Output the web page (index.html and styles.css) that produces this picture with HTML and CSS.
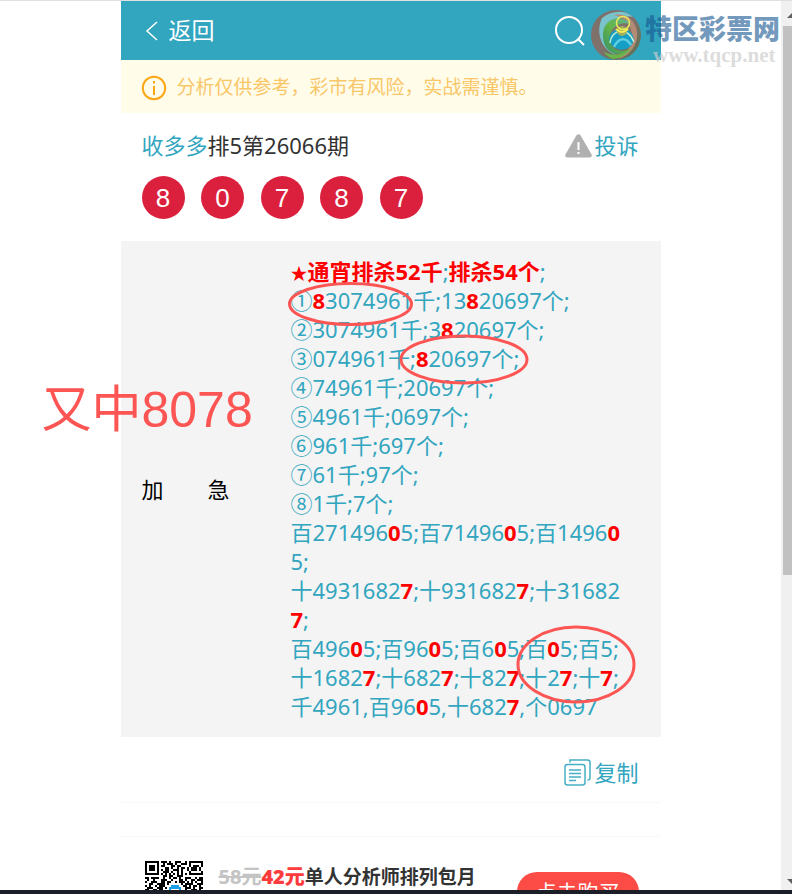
FILE: index.html
```html
<!DOCTYPE html>
<html lang="zh-CN">

<head>
    <meta charset="UTF-8" />
    <meta name="viewport" content="width=device-width, initial-scale=1.0" />
    <title>收多多排5第26066期</title>
    <link rel="stylesheet" href="styles.css">
</head>

<body>
    <div class="window">
        <div class="page">
            <main>
                <header class="topbar">
                    <a class="back" href="#">
                        <svg width="14" height="22" viewBox="0 0 14 22"><path d="M12 2L2 11l10 9" /></svg>
                        返回
                    </a>
                    <button class="search" type="button" aria-label="搜索">
                        <svg width="32" height="32" viewBox="0 0 32 32"><circle cx="15" cy="15" r="13" /><path d="M24 24l6 6" /></svg>
                    </button>
                </header>

                <div class="notice">
                    <svg width="26" height="26" viewBox="0 0 26 26">
                        <circle cx="13" cy="13" r="11.2" />
                        <path d="M13 11v9M13 6v2.5" />
                    </svg>
                    <p>分析仅供参考，彩市有风险，实战需谨慎。</p>
                </div>

                <section class="issue">
                    <div class="issue-head">
                        <h1><a href="#">收多多</a>排5第26066期</h1>
                        <a class="report" href="#">
                            <svg width="27" height="24" viewBox="0 0 27 24">
                                <path d="M11.4 1.5q2.1-2.6 4.2 0l11 19q1 3-2 3H2.4q-3 0-2-3z" fill="#b0b0b0" />
                                <path d="M13.5 8v8M13.5 18v2" stroke="#fff" stroke-width="2" />
                            </svg>
                            投诉
                        </a>
                    </div>
                    <div class="balls">
                        <span>8</span>
                        <span>0</span>
                        <span>7</span>
                        <span>8</span>
                        <span>7</span>
                    </div>
                </section>

                <section class="plan">
                    <div class="plan-name">加　　急</div>
                    <div class="plan-text">
                        <p><b><span class="star">★</span>通宵排杀52千</b>;<b>排杀54个</b>;</p>
                        <p>①<b>8</b>3074961千;13<b>8</b>20697个;</p>
                        <p>②3074961千;3<b>8</b>20697个;</p>
                        <p>③074961千;<b>8</b>20697个;</p>
                        <p>④74961千;20697个;</p>
                        <p>⑤4961千;0697个;</p>
                        <p>⑥961千;697个;</p>
                        <p>⑦61千;97个;</p>
                        <p>⑧1千;7个;</p>
                        <p>百271496<b>0</b>5;百71496<b>0</b>5;百1496<b>0</b>5;</p>
                        <p>十4931682<b>7</b>;十931682<b>7</b>;十31682<b>7</b>;</p>
                        <p>百496<b>0</b>5;百96<b>0</b>5;百6<b>0</b>5;百<b>0</b>5;百5;</p>
                        <p>十1682<b>7</b>;十682<b>7</b>;十82<b>7</b>;十2<b>7</b>;十<b>7</b>;</p>
                        <p>千4961,百96<b>0</b>5,十682<b>7</b>,个0697</p>
                    </div>
                    <svg class="marks" width="540" height="496" viewBox="0 0 540 496">
                        <ellipse cx="229.5" cy="63" rx="61" ry="20.5" />
                        <ellipse cx="343" cy="118.5" rx="63" ry="23.5" />
                        <ellipse cx="455" cy="423.5" rx="58" ry="37.5" />
                    </svg>
                    <div class="win-note">又中8078</div>
                </section>

                <div class="copy-row">
                    <button class="copy" type="button">
                        <svg width="27" height="27" viewBox="0 0 27 27">
                            <path d="M6 3.5V1h17.5q2.5 0 2.5 2.5V19q0 2-2.5 2" />
                            <rect x="1" y="5.5" width="20" height="20.5" rx="2.5" />
                            <path d="M5 11h12M5 14.5h12M5 18h12M5 21.5h7" />
                        </svg>
                        复制
                    </button>
                </div>
                <div class="spacer"></div>

                <section class="promo">
                    <svg class="qr" width="58" height="58" viewBox="0 0 29 29" shape-rendering="crispEdges">
                        <path d="M0 .5h7M8 .5h3m1 0h1m2 0h3m2 0h1M22 .5h7
                            M0 1.5h1m5 0h1m2 0h1m1 0h3m1 0h1m2 0h3m1 0h1m5 0h1
                            M0 2.5h1m1 0h3m1 0h1m1 0h2m3 0h2m1 0h2m4 0h1m1 0h3m1 0h1
                            M0 3.5h1m1 0h3m1 0h1m3 0h2m1 0h1m2 0h1m1 0h2m1 0h1m1 0h3m1 0h1
                            M0 4.5h1m1 0h3m1 0h1m1 0h1m1 0h2m2 0h3m1 0h1m2 0h1m1 0h3m1 0h1
                            M0 5.5h1m5 0h1m2 0h3m1 0h1m2 0h1m1 0h1m3 0h1m5 0h1
                            M0 6.5h7m1 0h1m1 0h1m1 0h1m1 0h1m1 0h1m1 0h1m1 0h1m1 0h7
                            M9 7.5h2m1 0h2m2 0h3
                            M0 8.5h2m1 0h4m2 0h1m2 0h1m1 0h2m1 0h1m2 0h3m2 0h1m1 0h2
                            M1 9.5h1m2 0h1m3 0h3m2 0h1m3 0h2m1 0h1m2 0h2m1 0h4
                            M0 10.5h1m2 0h3m2 0h2m1 0h2m2 0h1m1 0h3m1 0h1m1 0h1m1 0h1m2 0h1
                            M2 11.5h2m2 0h4m1 0h1m6 0h1m1 0h4m2 0h3
                            M0 12.5h1m1 0h1m2 0h1m1 0h3m9 0h2m1 0h1m1 0h2m1 0h1m1 0h1
                            M1 13.5h3m2 0h3m1 0h1m9 0h3m1 0h1m2 0h2
                            M0 14.5h2m2 0h2m1 0h2m11 0h1m2 0h3m1 0h1" />
                        <path class="qr-logo" d="M13 12.5h4M12 13.5h6M12 14.5h1m4 0h1" />
                    </svg>
                    <p><del>58元</del><strong>42元</strong>单人分析师排列包月</p>
                    <button class="buy" type="button">点击购买</button>
                </section>
            </main>

            <div class="watermark">
                <svg width="52" height="52" viewBox="0 0 52 52">
                    <defs>
                        <linearGradient id="ring" x1="0" y1="0" x2="1" y2="1">
                            <stop offset="0" stop-color="#7d7068" />
                            <stop offset=".5" stop-color="#80716c" />
                            <stop offset="1" stop-color="#58704f" />
                        </linearGradient>
                        <linearGradient id="leaf" x1="0" y1="1" x2="1" y2="0">
                            <stop offset="0" stop-color="#348e68" />
                            <stop offset=".5" stop-color="#66b548" />
                            <stop offset="1" stop-color="#5fb3a0" />
                        </linearGradient>
                    </defs>
                    <circle cx="26" cy="26" r="25" fill="url(#ring)" />
                    <!-- outer blades -->
                    <path d="M12 9C22 1 36 1 43 8 30 6 20 12 17 22 14 32 17 41 27 46 12 42 5 24 12 9z" fill="#79c3cd" />
                    <path d="M24 6C38 3 49 15 47 29 45 40 38 47 28 50 37 43 43 36 42 26 41 15 34 8 24 6z" fill="#b58a74" />
                    <path d="M13 27C12 10 31 3 42 16 31 11 20 18 20 29 20 40 30 46 42 39 28 51 13 43 13 27z" fill="url(#leaf)" />
                    <path d="M14 43q14 7 28-4-9 11-19 11-6-2-9-7z" fill="#6bb64a" />
                    <!-- inner figure -->
                    <path d="M19 31C19 17 41 15 44 30 42 43 24 45 19 31z" fill="#159fc4" />
                    <path d="M20 34C21 20 38 17 44 33" fill="none" stroke="#c3ecd2" stroke-width="1.5" />
                    <path d="M24 38c5-10 12-10 17-2" fill="none" stroke="#5dcee3" stroke-width="2.5" />
                    <circle cx="32" cy="22" r="5" fill="#9fb05c" />
                    <circle cx="33" cy="14" r="6.5" fill="none" stroke="#ece95b" stroke-width="1.5" />
                    <path d="M26 20q6 6 12 0" fill="none" stroke="#f3ee55" stroke-width="2" />
                </svg>
                <div class="watermark-text">
                    <strong>特区彩票网</strong>
                    <span>www.tqcp.net</span>
                </div>
            </div>
        </div>

        <div class="scrollbar">
            <svg width="5" height="5" viewBox="0 0 5 5"><path d="M0 5L5 0v5z" /></svg>
            <div class="thumb"></div>
            <svg width="5" height="5" viewBox="0 0 5 5"><path d="M0 0h5v5z" /></svg>
        </div>
    </div>
    <div class="taskbar"></div>
</body>

</html>
```

FILE: styles.css
```css
* {
    box-sizing: border-box;
}

body {
    margin: 0;
    height: 100vh;
    display: flex;
    flex-direction: column;
    overflow: hidden;
    font-family: "Noto Sans", "Noto Sans CJK SC", sans-serif;
    font-size: 22px;
    line-height: 29px;
    color: #333;
    background-color: #fff;
}

h1,
p {
    margin: 0;
    font-size: inherit;
    font-weight: normal;
}

a {
    color: #32a5bf;
    text-decoration: none;
}

button {
    border: 0;
    padding: 0;
    background: none;
    font: inherit;
    cursor: pointer;
}

svg {
    display: block;
    fill: none;
    flex-shrink: 0;
}

.window {
    flex: 1;
    min-height: 0;
    display: flex;
    border-top: 1px solid #e0e0e0;
}

.page {
    position: relative;
    flex: 1;
    overflow: hidden;
}

main {
    max-width: 540px;
    margin: 0 auto;
}

.topbar {
    height: 59px;
    padding: 0 75px 0 24px;
    display: flex;
    align-items: center;
    justify-content: space-between;
    background-color: #32a5bf;
}

.topbar svg {
    stroke: #fff;
    stroke-width: 2;
}

.topbar .back svg {
    stroke-width: 1.5;
}

.back {
    display: flex;
    align-items: center;
    gap: 10px;
    color: #fff;
    font-size: 23px;
}

.notice {
    height: 53px;
    padding: 2px 20px 0;
    display: flex;
    align-items: center;
    gap: 10px;
    background-color: #fffdea;
    color: #f9c668;
    font-size: 19px;
}

.notice svg {
    stroke: #fca615;
    stroke-width: 2;
}

.issue {
    height: 128px;
    padding: 18px 22px 0 21px;
}

.issue-head {
    display: flex;
    justify-content: space-between;
    margin-bottom: 16px;
}

.report {
    display: flex;
    align-items: center;
    gap: 2px;
}

.balls {
    display: flex;
    justify-content: space-between;
    max-width: 281px;
}

.balls span {
    width: 43px;
    height: 43px;
    border-radius: 50%;
    background-color: #db203d;
    color: #fff;
    font: 26px/44px "Liberation Sans", sans-serif;
    text-align: center;
}

.plan {
    position: relative;
    display: flex;
    align-items: center;
    padding: 16px 32px 16px 21px;
    background-color: #f4f4f4;
}

.plan-name {
    width: 149px;
    color: #000;
}

.plan-text {
    flex: 1;
    color: #32a5bf;
    word-break: break-all;
}

.plan-text b {
    color: #f00;
}

.star {
    font-size: 17px;
    line-height: 1;
}

.marks {
    position: absolute;
    top: 0;
    left: 0;
    stroke: #fc5553;
    stroke-width: 3;
}

.win-note {
    position: absolute;
    top: 139px;
    left: -79px;
    color: #fc5553;
    font: 50px/60px "Liberation Sans", "Noto Sans CJK SC", sans-serif;
    white-space: nowrap;
}

.copy-row {
    height: 66px;
    padding: 6px 22px 0 0;
    display: flex;
    justify-content: flex-end;
    border-bottom: 1px solid #f8f8f8;
}

.copy {
    display: flex;
    align-items: center;
    gap: 3px;
    color: #32a5bf;
}

.copy svg {
    stroke: #45b0c5;
    stroke-width: 1.5;
}

.spacer {
    height: 34px;
    border-bottom: 1px solid #f8f8f8;
}

.promo {
    display: flex;
    align-items: flex-start;
    padding: 24px 22px 0 24px;
    font-size: 19px;
}

.promo p {
    margin: 1px auto 0 16px;
    font-weight: bold;
}

.promo del {
    color: #c4c4c4;
    font-size: 20px;
}

.promo strong {
    color: #fc3c3c;
    font-size: 20px;
}

.qr {
    stroke: #000;
}

.qr-logo {
    stroke: #1a9fe8;
}

.buy {
    width: 122px;
    height: 40px;
    margin-top: 11px;
    border-radius: 20px;
    background-color: #fd4b45;
    color: #fff;
    font-size: 21px;
}

.watermark {
    position: absolute;
    top: 8px;
    right: 0;
    display: flex;
    gap: 3px;
}

.watermark-text {
    display: flex;
    flex-direction: column;
    padding-top: 5px;
    width: 136px;
}

.watermark strong {
    color: rgba(20, 85, 145, .6);
    font-size: 27px;
    font-weight: 900;
    line-height: 30px;
    white-space: nowrap;
}

.watermark span {
    padding-left: 8px;
    color: rgba(205, 205, 205, .7);
    font: bold 21px/22px "Liberation Serif", serif;
}

.scrollbar {
    width: 11px;
    padding: 12px 0 6px 2px;
    display: flex;
    flex-direction: column;
    background-color: #f0f0f0;
}

.scrollbar svg {
    margin-left: 4px;
    fill: #606060;
}

.thumb {
    height: 63%;
    margin: 8px 0 auto;
    background-color: #c1c1c1;
}

.taskbar {
    height: 4px;
    background: #1b1e26;
}
```
